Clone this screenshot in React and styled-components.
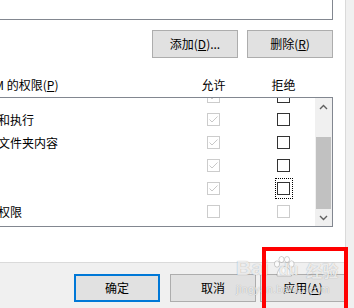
import React from 'react';
import styled, { createGlobalStyle } from 'styled-components';

const GlobalStyle = createGlobalStyle`
  html, body {
    margin: 0;
    padding: 0;
    background: #f0f0f0;
  }
  body {
    font-family: "Noto Sans CJK SC", "Noto Sans", sans-serif;
    font-size: 12px;
    color: #000;
  }
`

const Window = styled.div`
  position: relative;
  width: 354px;
  height: 308px;
  overflow: hidden;
  background: #f0f0f0;
  display: flex;
  flex-direction: column;
`

const TabPage = styled.div`
  box-sizing: border-box;
  flex: none;
  display: flex;
  flex-direction: column;
  width: 466px;
  height: 263px;
  margin-left: -120px;
  padding: 0 12px 0 10px;
  background: #fff;
  border-right: 1px solid #dadada;
  border-bottom: 1px solid #dadada;
`

const GroupList = styled.div`
  box-sizing: border-box;
  height: 21px;
  margin-top: -1px;
  border: 1px solid #828790;
  background: #fff;
`

const ButtonRow = styled.div`
  display: flex;
  justify-content: flex-end;
  gap: ${p => p.$gap || 9}px;
  margin-top: ${p => p.$top || 0}px;
  padding-right: ${p => p.$right || 0}px;
`

const Button = styled.button`
  box-sizing: border-box;
  width: 86px;
  height: 28px;
  margin: 0 0 0 ${p => p.$shift || 0}px;
  padding: 0;
  font: inherit;
  font-size: 12px;
  line-height: 16px;
  color: #000;
  background: #e1e1e1;
  border: ${p => p.$default ? '2px solid #0078d7' : '1px solid #adadad'};
  border-radius: 0;
`

const Key = styled.span`
  text-decoration: underline;
  text-underline-offset: 1px;
`

/***************************
 * Permission list
 */
const Header = styled.div`
  display: grid;
  grid-template-columns: 1fr 41px 29px 41px 29px;
  margin-top: 19px;
  height: 16px;
  line-height: 16px;
  white-space: nowrap;
`

const HeaderLabel = styled.div`
  padding-left: 70px;
`

const HeaderCell = styled.div`
  text-align: center;
`

const ListBox = styled.div`
  box-sizing: border-box;
  display: flex;
  height: 130px;
  margin-top: 4px;
  border: 1px solid #828790;
  background: #fff;
`

const Rows = styled.div`
  flex: 1;
  overflow: hidden;
`

const RowsInner = styled.div`
  margin-top: -13px;
`

const Row = styled.div`
  display: grid;
  grid-template-columns: 1fr 41px 29px 41px 11px;
  align-items: center;
  height: 23px;
  white-space: nowrap;
`

const RowLabel = styled.div`
  padding-left: 83px;
  line-height: 16px;
`

const Box = styled.span`
  position: relative;
  box-sizing: border-box;
  display: flex;
  align-items: center;
  justify-content: center;
  justify-self: center;
  width: 13px;
  height: 13px;
  background: #fff;
  border: 1px solid ${p => p.$disabled ? '#cccccc' : '#333333'};

  ${p => p.$focus && `
    &::after {
      content: "";
      position: absolute;
      top: -5px;
      bottom: -5px;
      left: -3px;
      right: -4px;
      border: 1px dotted #000;
    }
  `}
`

const ScrollBar = styled.div`
  flex: none;
  display: flex;
  flex-direction: column;
  width: 17px;
  background: #f0f0f0;
`

const ScrollArrow = styled.div`
  flex: none;
  display: flex;
  align-items: center;
  justify-content: center;
  height: 17px;
`

const ScrollTrack = styled.div`
  flex: 1;
  display: flex;
  flex-direction: column;
`

const Thumb = styled.div`
  margin: ${p => p.$offset}px 1px 0;
  height: ${p => p.$size}px;
  background: #c1c1c1;
`

/***************************
 * Overlays
 */
const Highlight = styled.div`
  position: absolute;
  left: 262px;
  top: 247px;
  width: 86px;
  height: 66px;
  box-sizing: border-box;
  border: 4px solid #ff0000;
  pointer-events: none;
`

const Watermark = styled.div`
  position: absolute;
  left: 236px;
  top: 252px;
  color: rgba(255, 255, 255, 0.8);
  text-shadow: 0 0 1px rgba(0, 0, 0, 0.35);
  pointer-events: none;
`

const MarkLine = styled.div`
  display: flex;
  align-items: flex-end;
  height: 26px;
`

const Brand = styled.span`
  font-family: ${p => p.$cjk ? '"Noto Sans CJK SC", sans-serif' : '"Liberation Sans", Arial, sans-serif'};
  font-weight: bold;
  font-size: ${p => p.$size}px;
  line-height: 1;
  margin-left: ${p => p.$left || 0}px;
`

const MarkUrl = styled.div`
  margin-top: 6px;
  font-family: "Liberation Sans", Arial, sans-serif;
  font-size: 11px;
  line-height: 11px;
  letter-spacing: 0.3px;
`

const Check = () => (
  <svg width="11" height="11" viewBox="0 0 11 11">
    <path d="M1.5 5.5 L4 8 L9.5 2.5" fill="none" stroke="#c8c8c8" strokeWidth="1" />
  </svg>
)

const Chevron = ({ up }) => (
  <svg width="9" height="6" viewBox="0 0 9 6">
    <path d={up ? "M1 5 L4.5 1.5 L8 5" : "M1 1 L4.5 4.5 L8 1"}
      fill="none" stroke="#606060" strokeWidth="1.4" />
  </svg>
)

const Paw = () => (
  <svg width="24" height="22" viewBox="0 0 24 22" style={{ marginLeft: 3 }}>
    <g fill="rgba(255,255,255,0.8)" stroke="rgba(0,0,0,0.18)" strokeWidth="1">
      <ellipse cx="5" cy="8" rx="2.6" ry="3.2" />
      <ellipse cx="9.5" cy="3.5" rx="2.6" ry="3" />
      <ellipse cx="15" cy="3.5" rx="2.6" ry="3" />
      <ellipse cx="19.5" cy="8" rx="2.6" ry="3.2" />
      <path d="M5 20 C5 14 9 10.5 12 10.5 C15 10.5 19.5 14 19.5 20 Z" />
    </g>
  </svg>
)

const PERMISSIONS = [
  { name: '修改', allow: true },
  { name: '读取和执行', allow: true },
  { name: '列出文件夹内容', allow: true },
  { name: '读取', allow: true },
  { name: '写入', allow: true, focus: true },
  { name: '特殊权限', allow: false, special: true },
];

const PermissionRow = ({ name, allow, focus, special }) => (
  <Row>
    <RowLabel>{name}</RowLabel>
    <Box $disabled>{allow && <Check />}</Box>
    <span />
    <Box $disabled={special} $focus={focus} />
    <span />
  </Row>
)

const App = () => {
  return (
    <Window>
      <GlobalStyle />
      <TabPage>
        <GroupList />

        <ButtonRow $top={10}>
          <Button>添加(<Key>D</Key>)...</Button>
          <Button>删除(<Key>R</Key>)</Button>
        </ButtonRow>

        <Header>
          <HeaderLabel>SYSTEM 的权限(<Key>P</Key>)</HeaderLabel>
          <HeaderCell>允许</HeaderCell>
          <span />
          <HeaderCell>拒绝</HeaderCell>
          <span />
        </Header>

        <ListBox>
          <Rows>
            <RowsInner>
              {PERMISSIONS.map(p => <PermissionRow key={p.name} {...p} />)}
            </RowsInner>
          </Rows>
          <ScrollBar>
            <ScrollArrow><Chevron up /></ScrollArrow>
            <ScrollTrack>
              <Thumb $offset={22} $size={72} />
            </ScrollTrack>
            <ScrollArrow><Chevron /></ScrollArrow>
          </ScrollBar>
        </ListBox>
      </TabPage>

      <ButtonRow $top={11} $gap={10} $right={8}>
        <Button $default>确定</Button>
        <Button>取消</Button>
        <Button $shift={-6}>应用(<Key>A</Key>)</Button>
      </ButtonRow>

      <Watermark>
        <MarkLine>
          <Brand $size={21}>Bai</Brand>
          <Paw />
          <Brand $size={16} $left={-17}>du</Brand>
          <Brand $size={16} $left={8} $cjk>经验</Brand>
        </MarkLine>
        <MarkUrl>jingyan.baidu.com</MarkUrl>
      </Watermark>

      <Highlight />
    </Window>
  );
}

export default App;
